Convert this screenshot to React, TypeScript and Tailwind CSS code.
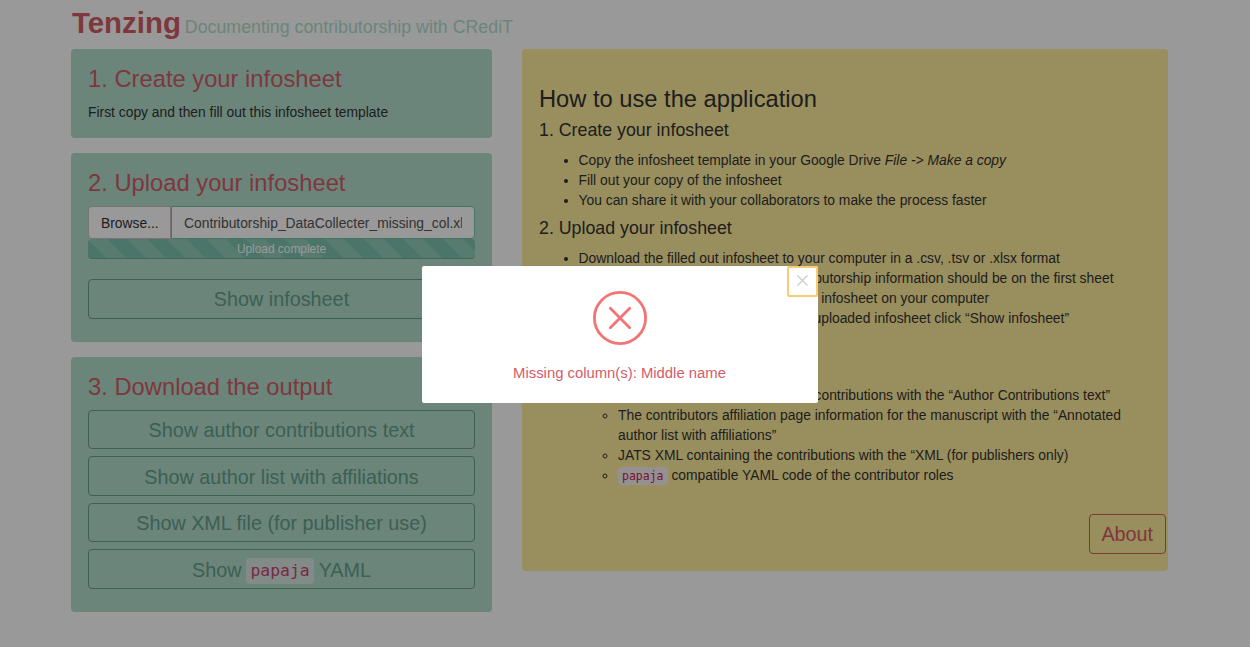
import React from "react";

const outline =
  "flex h-[39.5px] w-full items-center justify-center rounded-[4px] border border-[#669e8c] text-[19.8px] leading-none text-[#669e8c]";

function StepTitle({ children }: { children: React.ReactNode }) {
  return <h2 className="text-[23.75px] leading-[26px] text-[#d45c68]">{children}</h2>;
}

function DownloadStep() {
  return (
    <section className="mt-[15px] h-[255px] rounded-[4px] bg-[#b2decd] px-[17px] pt-[17px]">
      <StepTitle>3. Download the output</StepTitle>
      <div className="mt-[9.5px] flex flex-col gap-[7px]">
        <button className={outline + " pt-[4px]"}>Show author contributions text</button>
        <button className={outline + " pt-[4px]"}>Show author list with affiliations</button>
        <button className={outline + " pt-[4px]"}>Show XML file (for publisher use)</button>
        <button className={outline + " pt-[4px]"}>
          <span>Show</span>
          <code className="mx-[5px] rounded-[4px] bg-[#dbe8e5] px-[4px] py-[4px] font-['DejaVu_Sans_Mono',monospace] text-[16.4px] leading-[18px] text-[#c7466c]">
            papaja
          </code>
          <span>YAML</span>
        </button>
      </div>
    </section>
  );
}

function UploadStep() {
  return (
    <section className="mt-[15px] h-[189px] rounded-[4px] bg-[#b2decd] px-[17px] pt-[17px]">
      <StepTitle>2. Upload your infosheet</StepTitle>
      <div className="mt-[10px] flex h-[33px] text-[13.85px] leading-[32.5px] text-[#555]">
        <div className="w-[83px] rounded-l-[4px] border border-[#cdbfc2] bg-white pl-[12px] text-[#333]">Browse...</div>
        <div className="flex-1 overflow-hidden rounded-r-[4px] border border-[#78c2ad] bg-white px-[12px]">
          <div className="overflow-hidden whitespace-nowrap">Contributorship_DataCollecter_missing_col.xlsx</div>
        </div>
      </div>
      <div className="h-[20px] rounded-[4px] border-b border-[#6eac99] bg-[#7dc4ad] bg-[linear-gradient(45deg,rgba(178,222,205,0.4)_25%,transparent_25%,transparent_50%,rgba(178,222,205,0.4)_50%,rgba(178,222,205,0.4)_75%,transparent_75%,transparent)] bg-[length:39.5px_39.5px] text-center text-[11.9px] leading-[20px] text-white">
        Upload complete
      </div>
      <button className={outline + " mt-[20px] pt-[3px]"}>Show infosheet</button>
    </section>
  );
}

function Guide() {
  return (
    <section className="h-[522px] w-[646.5px] rounded-[4px] bg-[#ffed9b] pl-[17.5px] pr-[2px] pt-[37px] text-[13.85px] leading-[19.8px] text-[#333]">
      <h2 className="text-[23.7px] leading-[26px]">How to use the application</h2>
      <h3 className="mt-[8px] text-[17.8px] leading-[20px]">1. Create your infosheet</h3>
      <ul className="mt-[11px] list-disc pl-[39.5px]">
        <li>Copy the infosheet template in your Google Drive <em>File -&gt; Make a copy</em></li>
        <li>Fill out your copy of the infosheet</li>
        <li>You can share it with your collaborators to make the process faster</li>
      </ul>
      <h3 className="mt-[8px] text-[17.8px] leading-[20px]">2. Upload your infosheet</h3>
      <ul className="mt-[11px] list-disc pl-[39.5px]">
        <li>Download the filled out infosheet to your computer in a .csv, .tsv or .xlsx format</li>
        <li><p className="w-[535px] whitespace-nowrap text-right">Note that in the spreadsheet the contributorship information should be on the first sheet</p></li>
        <li><p className="w-[410.5px] whitespace-nowrap text-right">Click “Browse” and choose the infosheet on your computer</p></li>
        <li><p className="w-[490.5px] whitespace-nowrap text-right">When you would like to check the uploaded infosheet click “Show infosheet”</p></li>
      </ul>
      <h3 className="mt-[8px] text-[17.8px] leading-[20px]">3. Download the output</h3>
      <ul className="mt-[10px] list-disc pl-[39.5px]">
        <li className="pt-[19.8px]">
          <ul className="list-[circle] pl-[39.5px]">
            <li><p className="w-[492px] whitespace-nowrap text-right">The human readable report of contributions with the “Author Contributions text”</p></li>
            <li className="w-[520px]">The contributors affiliation page information for the manuscript with the “Annotated author list with affiliations”</li>
            <li>JATS XML containing the contributions with the “XML (for publishers only)</li>
            <li>
              <code className="rounded-[4px] bg-[#f9f2f4] px-[4px] py-[2px] font-['DejaVu_Sans_Mono',monospace] text-[11.5px] text-[#c7254e]">papaja</code> compatible YAML code of the contributor roles
            </li>
          </ul>
        </li>
      </ul>
      <div className="mt-[28px] flex justify-end">
        <button className="flex h-[39.5px] w-[77.5px] items-center justify-center rounded-[4px] border border-[#d45c68] pt-[2px] text-[19.8px] leading-none text-[#d45c68]">About</button>
      </div>
    </section>
  );
}

function ErrorDialog() {
  return (
    <div className="absolute inset-0 bg-black/40">
      <div className="absolute left-[421.5px] top-[266px] flex h-[137px] w-[396px] flex-col items-center rounded-[2px] bg-white pt-[25px]">
        <svg className="h-[54px] w-[54px]" viewBox="0 0 54 54" fill="none" stroke="#f27474">
          <circle cx="27" cy="27" r="25.6" strokeWidth="2.8" />
          <path d="M17.3 17.3L36.7 36.7M36.7 17.3L17.3 36.7" strokeWidth="2.8" strokeLinecap="round" />
        </svg>
        <p className="mt-[18px] text-[14.85px] leading-[20px] text-[#d45c68]">Missing column(s): Middle name</p>
        <button aria-label="Close" className="absolute right-0 top-0 flex h-[30.5px] w-[30.5px] items-center justify-center rounded-[2px] border-2 border-[#f7cb78] pb-[2px]">
          <svg className="h-[11px] w-[11px]" viewBox="0 0 11 11" stroke="#ccc" strokeWidth="1.3">
            <path d="M.5.5L10.5 10.5M10.5.5L.5 10.5" />
          </svg>
        </button>
      </div>
    </div>
  );
}

export default function App() {
  return (
    <div className="relative h-[647px] w-[1250px] overflow-hidden bg-white pl-[71px] font-['Liberation_Sans',Arial,sans-serif]">
      <header className="flex h-[49px] items-baseline gap-[4px] pl-px pt-[5px]">
        <h1 className="text-[29.4px] font-bold leading-[36px] text-[#d45c68]">Tenzing</h1>
        <span className="text-[17.8px] text-[#b2decd]">Documenting contributorship with CRediT</span>
      </header>
      <main className="flex gap-[29.5px]">
        <div className="w-[421px]">
          <section className="h-[89px] rounded-[4px] bg-[#b2decd] px-[17px] pt-[17px]">
            <StepTitle>1. Create your infosheet</StepTitle>
            <p className="mt-[10px] text-[13.85px] leading-[20px] text-[#333]">First copy and then fill out this infosheet template</p>
          </section>
          <UploadStep />
          <DownloadStep />
        </div>
        <Guide />
      </main>
      <ErrorDialog />
    </div>
  );
}
